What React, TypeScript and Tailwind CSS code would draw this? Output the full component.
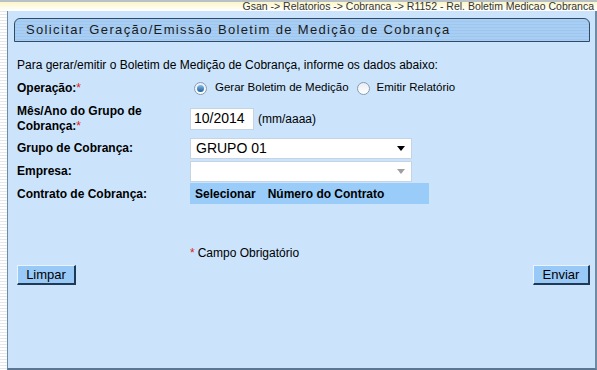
import React from "react";

const font = { fontFamily: '"Liberation Sans", Arial, sans-serif' };

function Radio({ checked }: { checked?: boolean }) {
  return (
    <span className="inline-flex items-center justify-center w-[13px] h-[13px] rounded-full border border-[#8a9bb0] bg-gradient-to-b from-[#e8eef5] to-[#ffffff]">
      {checked && <span className="w-[7px] h-[7px] rounded-full bg-gradient-to-b from-[#7fc0ef] to-[#1f5f9a]" />}
    </span>
  );
}

function Select({ value, disabled }: { value?: string; disabled?: boolean }) {
  return (
    <div className="w-[222px] h-[21px] bg-white border border-[#c5d3e2] flex items-center justify-between pl-[5px] pr-[6px]">
      <span className="text-[14px] text-black">{value}</span>
      <svg width="8" height="5" viewBox="0 0 8 5">
        <path d="M0 0 L8 0 L4 5 Z" fill={disabled ? "#a0a0a0" : "#000"} />
      </svg>
    </div>
  );
}

export default function App() {
  return (
    <div style={font} className="w-[597px] h-[370px] bg-white flex flex-col overflow-hidden text-[12px] text-black">
      <div className="h-[11px] flex items-start justify-end pr-[3px] border-t-[2px] border-[#b8c0c8] bg-gradient-to-b from-[#fdf6c8] to-white">
        <span className="text-[10.5px] leading-[9px] text-[#333]">Gsan -&gt; Relatorios -&gt; Cobranca -&gt; R1152 - Rel. Boletim Medicao Cobranca</span>
      </div>
      <div className="flex flex-1">
        <div className="w-[7px] bg-[repeating-linear-gradient(to_bottom,#e4e7ea_0px,#e4e7ea_1px,#ffffff_1px,#ffffff_3px)]" />
        <div className="flex-1 bg-[#cbe4fc] border-l border-b-[2px] border-r-[2px] border-l-[#6a8aa8] border-b-[#5a7690] border-r-[#6f8aa3] flex flex-col pt-[7px] pl-[6px] pr-[5px]">
          <div className="h-[24px] relative border border-[#2e4a66] rounded-tl-[6px] rounded-tr-[6px] bg-[repeating-linear-gradient(to_bottom,#a9cef3_0px,#a9cef3_2px,#9ec6ee_2px,#9ec6ee_3px)] flex items-center pl-[11px]">
            <span className="text-[13px] tracking-[1.35px] text-[#1a1a1a]">Solicitar Geração/Emissão Boletim de Medição de Cobrança</span>
          </div>
          <div className="pl-[3px] pt-[16px] flex flex-col">
            <div className="h-[14px] flex items-center">Para gerar/emitir o Boletim de Medição de Cobrança, informe os dados abaixo:</div>
            <div className="h-[24px] mt-[4px] flex items-center">
              <div className="w-[173px] font-bold">Operação:<span className="text-[#e02020] font-normal">*</span></div>
              <div className="flex items-center text-[11.5px]">
                <span className="ml-[4px] flex"><Radio checked /></span>
                <span className="ml-[8px]">Gerar Boletim de Medição</span>
                <span className="ml-[8px] flex"><Radio /></span>
                <span className="ml-[7px]">Emitir Relatório</span>
              </div>
            </div>
            <div className="h-[37px] flex items-center">
              <div className="w-[173px] font-bold leading-[15px]">Mês/Ano do Grupo de<br />Cobrança:<span className="text-[#e02020] font-normal">*</span></div>
              <div className="w-[64px] h-[22px] bg-white border border-[#c5d3e2] flex items-center pl-[3px] text-[14px]">10/2014</div>
              <span className="ml-[4px]">(mm/aaaa)</span>
            </div>
            <div className="h-[22px] flex items-center">
              <div className="w-[173px] font-bold">Grupo de Cobrança:</div>
              <Select value="GRUPO 01" />
            </div>
            <div className="h-[24px] flex items-center">
              <div className="w-[173px] font-bold">Empresa:</div>
              <Select disabled />
            </div>
            <div className="h-[21px] flex items-center">
              <div className="w-[173px] font-bold">Contrato de Cobrança:</div>
              <div className="w-[239px] h-[21px] bg-[#99ccf9] flex items-center pl-[5px] font-bold">
                <span>Selecionar</span>
                <span className="ml-[12px]">Número do Contrato</span>
              </div>
            </div>
            <div className="h-[16px] mt-[41px] flex items-center pl-[173px]">
              <span className="text-[#e02020]">*</span>
              <span className="ml-[3px]">Campo Obrigatório</span>
            </div>
            <div className="mt-[4px] flex justify-between">
              <button className="w-[59px] h-[20px] bg-[#99c9f7] border border-[#eaf4ff] border-r-[#203a56] border-b-[#203a56] border-r-[2px] border-b-[2px] text-[13px] text-black flex items-center justify-center">Limpar</button>
              <button className="w-[57px] h-[20px] bg-[#99c9f7] border border-[#eaf4ff] border-r-[#203a56] border-b-[#203a56] border-r-[2px] border-b-[2px] text-[13px] text-black flex items-center justify-center">Enviar</button>
            </div>
          </div>
        </div>
      </div>
    </div>
  );
}
